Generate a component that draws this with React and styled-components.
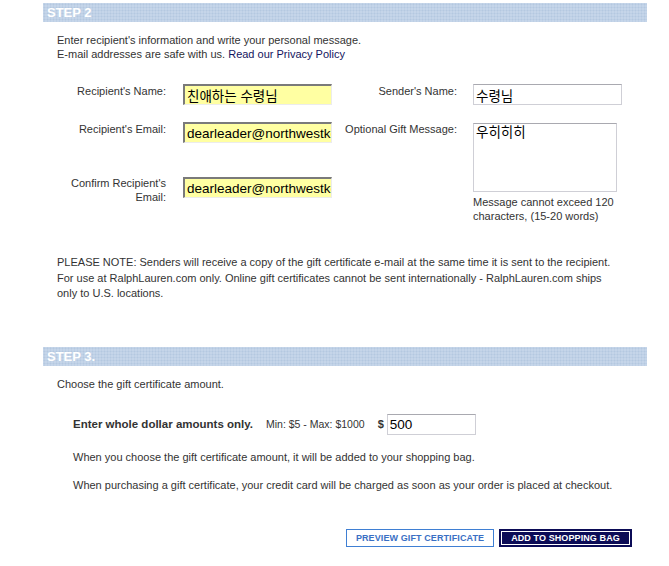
import React from "react";
import styled, { createGlobalStyle } from "styled-components";

const Global = createGlobalStyle`
  html, body { margin: 0; padding: 0; background: #fff; }
  body {
    font-family: "Liberation Sans", Arial, sans-serif;
    font-size: 11px;
    color: #333;
  }
`;

const Page = styled.div`
  width: 604px;
  margin-left: 43px;
  padding-top: 3px;
  padding-bottom: 19px;
`;

const StepBar = styled.div`
  height: 19px;
  line-height: 20px;
  padding-left: 4px;
  background-color: #c5d5e9;
  background-image: radial-gradient(circle, #b4c8e0 0.9px, transparent 1.1px);
  background-size: 3px 3px;
  color: #fff;
  font-weight: bold;
  font-size: 13px;
  margin-top: ${(p) => p.$top || 0}px;
`;

const Body = styled.div`
  padding-left: 14px;
`;

const Para = styled.p`
  margin: ${(p) => p.$top || 0}px 0 0 ${(p) => p.$indent || 0}px;
  line-height: ${(p) => p.$lh || 14}px;
  white-space: nowrap;
`;

const Link = styled.a`
  color: #14145e;
  text-decoration: none;
`;

const Form = styled.div`
  display: flex;
  margin-top: 23px;
`;

const Column = styled.div`
  display: flex;
  flex-direction: column;
  width: ${(p) => p.$w}px;
`;

const Field = styled.div`
  display: grid;
  grid-template-columns: ${(p) => p.$label}px ${(p) => p.$ctrl}px;
  column-gap: ${(p) => p.$gap}px;
  align-items: start;
  margin-top: ${(p) => p.$top || 0}px;
`;

const Label = styled.label`
  text-align: right;
  line-height: 14px;
  margin-top: ${(p) => p.$nudge || 0}px;
`;

const YellowInput = styled.input`
  box-sizing: border-box;
  width: 149px;
  height: 21px;
  margin: 0;
  padding: 0 0 0 2px;
  background: #ffffa2;
  border-top: 2px solid #7a7a7a;
  border-left: 2px solid #7a7a7a;
  border-right: 1px solid #ececec;
  border-bottom: 1px solid #ececec;
  font-family: "Liberation Sans", Arial, "Noto Sans CJK KR", sans-serif;
  font-size: 13.5px;
  color: #000;
  outline: none;
`;

const PlainInput = styled.input`
  box-sizing: border-box;
  width: ${(p) => p.$w || 149}px;
  height: 21px;
  margin: 0;
  padding: 0 0 0 2px;
  background: #fff;
  border: 1px solid #cfcfd6;
  border-top-color: #a9a9b0;
  font-family: "Liberation Sans", Arial, "Noto Sans CJK KR", sans-serif;
  font-size: 13.5px;
  color: #000;
  outline: none;
`;

const Area = styled.textarea`
  display: block;
  box-sizing: border-box;
  width: 144px;
  height: 69px;
  margin: 1px 0 0;
  padding: 1px 2px;
  resize: none;
  background: #fff;
  border: 1px solid #cfcfd6;
  border-top-color: #a9a9b0;
  font-family: "Liberation Sans", Arial, "Noto Sans CJK KR", sans-serif;
  font-size: 13.5px;
  line-height: 16px;
  color: #000;
  outline: none;
  overflow: hidden;
`;

const Help = styled.div`
  margin-top: 3px;
  line-height: 14px;
  white-space: nowrap;
`;

const AmountRow = styled.div`
  display: flex;
  align-items: center;
  margin: 23px 0 0 16px;
  height: 21px;
`;

const Strong = styled.span`
  font-weight: bold;
  font-size: ${(p) => p.$size || 11.5}px;
  margin-right: ${(p) => p.$mr || 0}px;
  color: #333;
`;

const Small = styled.span`
  font-size: 10.5px;
  margin-right: 13px;
`;

const Buttons = styled.div`
  display: flex;
  justify-content: flex-end;
  gap: 5px;
  margin: 37px 15px 0 0;
`;

const Button = styled.button`
  box-sizing: border-box;
  height: 18px;
  width: ${(p) => p.$w}px;
  margin: 0;
  padding: 0;
  font-family: "Liberation Sans", Arial, sans-serif;
  font-weight: bold;
  font-size: 9px;
  letter-spacing: 0.1px;
  cursor: pointer;
  border: 1px solid ${(p) => (p.$dark ? "#0b0b56" : "#3f7fd3")};
  background: ${(p) => (p.$dark ? "#0b0b56" : "#fff")};
  color: ${(p) => (p.$dark ? "#fff" : "#3a6fc4")};
  outline: ${(p) => (p.$dark ? "1px solid #fff" : "none")};
  outline-offset: -3px;
`;

export default function App() {
  return (
    <>
      <Global />
      <Page>
        <StepBar>STEP 2</StepBar>
        <Body>
          <Para $top={11}>
            Enter recipient's information and write your personal message.
            <br />
            E-mail addresses are safe with us. <Link href="#">Read our Privacy Policy</Link>
          </Para>

          <Form>
            <Column $w={276}>
              <Field $label={109} $ctrl={149} $gap={17}>
                <Label>Recipient's Name:</Label>
                <YellowInput defaultValue="친애하는 수령님" />
              </Field>
              <Field $label={109} $ctrl={149} $gap={17} $top={17}>
                <Label>Recipient's Email:</Label>
                <YellowInput defaultValue="dearleader@northwestkorea.com" />
              </Field>
              <Field $label={109} $ctrl={149} $gap={17} $top={34}>
                <Label $nudge={-1}>Confirm Recipient's Email:</Label>
                <YellowInput defaultValue="dearleader@northwestkorea.com" />
              </Field>
            </Column>
            <Column $w={289}>
              <Field $label={124} $ctrl={149} $gap={16}>
                <Label>Sender's Name:</Label>
                <PlainInput defaultValue="수령님" />
              </Field>
              <Field $label={124} $ctrl={149} $gap={16} $top={17}>
                <Label>Optional Gift Message:</Label>
                <div>
                  <Area defaultValue="우히히히" />
                  <Help>
                    Message cannot exceed 120
                    <br />
                    characters, (15-20 words)
                  </Help>
                </div>
              </Field>
            </Column>
          </Form>

          <Para $top={32} $lh={15.5}>
            PLEASE NOTE: Senders will receive a copy of the gift certificate e-mail at the same time it is sent to the recipient.
            <br />
            For use at RalphLauren.com only. Online gift certificates cannot be sent internationally - RalphLauren.com ships
            <br />
            only to U.S. locations.
          </Para>
        </Body>

        <StepBar $top={45}>STEP 3.</StepBar>
        <Body>
          <Para $top={11}>Choose the gift certificate amount.</Para>
          <AmountRow>
            <Strong $mr={13}>Enter whole dollar amounts only.</Strong>
            <Small>Min: $5 - Max: $1000</Small>
            <Strong $size={11} $mr={3}>$</Strong>
            <PlainInput $w={89} defaultValue="500" />
          </AmountRow>
          <Para $top={15} $indent={16}>
            When you choose the gift certificate amount, it will be added to your shopping bag.
          </Para>
          <Para $top={14} $indent={16}>
            When purchasing a gift certificate, your credit card will be charged as soon as your order is placed at checkout.
          </Para>
        </Body>
        <Buttons>
          <Button $w={148}>PREVIEW GIFT CERTIFICATE</Button>
          <Button $w={133} $dark>ADD TO SHOPPING BAG</Button>
        </Buttons>
      </Page>
    </>
  );
}
